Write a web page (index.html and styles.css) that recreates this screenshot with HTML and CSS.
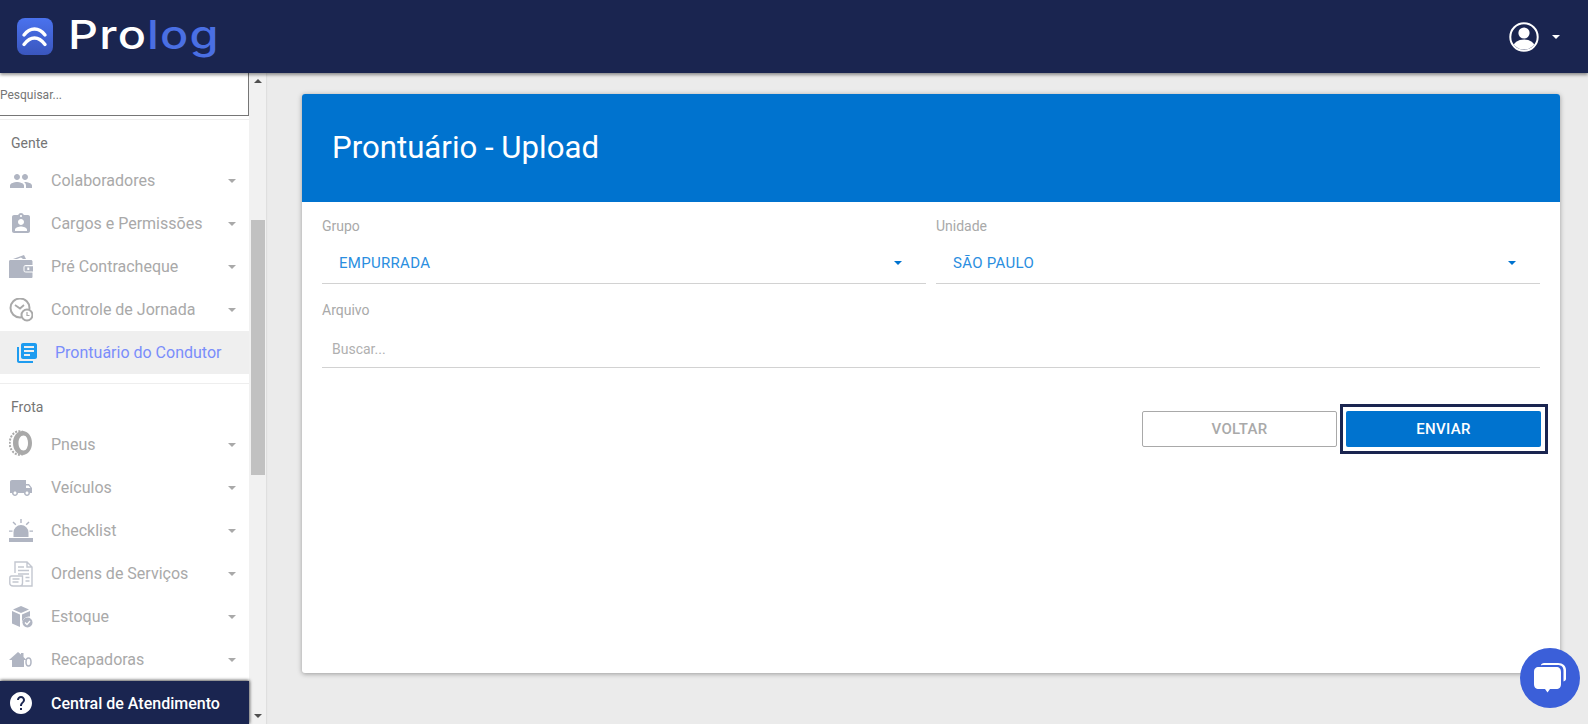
FILE: index.html
```html
<!DOCTYPE html>
<html lang="pt-BR">
<head>
<meta charset="utf-8">
<title>Prontuário - Upload</title>
<link rel="stylesheet" href="styles.css">
</head>
<body>
<header class="topbar">
  <div class="brand">
    <span class="brand-mark">
      <svg viewBox="0 0 36 37" width="36" height="37"><path d="M7 17C10 13 13.500 11 17.500 11S25 13 28 17M7 26.500C10 22.500 13.500 20 17.500 20S25 22.500 28 26.500" fill="none" stroke="#fff" stroke-width="3.400" stroke-linecap="round"/></svg>
    </span>
    <span class="brand-name">Pro<span class="brand-accent">log</span></span>
  </div>
  <div class="user">
    <svg viewBox="0 0 30 30" width="30" height="30"><defs><clipPath id="uc"><circle cx="15" cy="15" r="12.600"/></clipPath></defs><circle cx="15" cy="15" r="13.700" fill="none" stroke="#fff" stroke-width="2"/><circle cx="15" cy="11" r="5.600" fill="#fff"/><ellipse cx="15" cy="25" rx="11" ry="7.500" fill="#fff" clip-path="url(#uc)"/></svg>
    <span class="caret caret-white"></span>
  </div>
</header>

<div class="layout">
  <aside class="sidebar">
    <nav class="nav">
      <input class="search" type="text" placeholder="Pesquisar...">
      <div class="nav-scroll">
        <div class="group-title">Gente</div>
        <a class="item"><svg class="ico" viewBox="0 0 24 24"><path d="M16 11c1.660 0 2.990-1.340 2.990-3S17.660 5 16 5c-1.660 0-3 1.340-3 3s1.340 3 3 3zm-8 0c1.660 0 2.990-1.340 2.990-3S9.660 5 8 5C6.340 5 5 6.340 5 8s1.340 3 3 3zm0 2c-2.330 0-7 1.170-7 3.500V19h14v-2.500c0-2.330-4.670-3.500-7-3.500zm8 0c-.29 0-.62.02-.97.05 1.160.84 1.970 1.970 1.970 3.450V19h6v-2.500c0-2.330-4.670-3.500-7-3.500z"/></svg><span class="label">Colaboradores</span><span class="caret"></span></a>
        <a class="item"><svg class="ico" viewBox="0 0 24 24"><path d="M19 3h-4.180C14.400 1.840 13.300 1 12 1c-1.300 0-2.400.84-2.820 2H5c-1.100 0-2 .9-2 2v14c0 1.100.9 2 2 2h14c1.100 0 2-.9 2-2V5c0-1.100-.9-2-2-2zm-7 0c.55 0 1 .45 1 1s-.45 1-1 1-1-.45-1-1 .45-1 1-1zm0 4c1.660 0 3 1.340 3 3s-1.340 3-3 3-3-1.340-3-3 1.340-3 3-3zm6 12H6v-1.400c0-2 4-3.100 6-3.100s6 1.100 6 3.100V19z"/></svg><span class="label">Cargos e Permissões</span><span class="caret"></span></a>
        <a class="item"><svg class="ico" viewBox="0 0 24 24"><path d="M4 4 15 0l2 4h-3l-2-1.500L8 4zM0 6.500C0 5.500.7 5 1.500 5H22c.8 0 1.500.6 1.500 1.500V10h-6.500c-1.700 0-2.500 1-2.500 2.500v2.500c0 1.700.8 2.500 2.500 2.500h6.500V22c0 .6-.5 1-1.500 1H0zM15.500 11.200H24v5.300h-8.500zm2.800 1.400v2.400h2v-2.400z" fill-rule="evenodd"/></svg><span class="label">Pré Contracheque</span><span class="caret"></span></a>
        <a class="item"><svg class="ico ico-grey" viewBox="0 0 24 24"><circle cx="11" cy="10" r="9.500" fill="none" stroke-width="2"/><path d="M6 7l5 3.500L15 7" fill="none" stroke-width="1.800"/><circle cx="18" cy="17" r="5.500" fill="#fff" stroke-width="2"/><path d="M18 14v3.500h2.500" fill="none" stroke-width="1.200"/></svg><span class="label">Controle de Jornada</span><span class="caret"></span></a>
        <a class="item item-active"><svg class="ico ico-blue" viewBox="0 0 24 24"><path d="M4 6H2v14c0 1.100.9 2 2 2h14v-2H4V6zm16-4H8c-1.100 0-2 .9-2 2v12c0 1.100.9 2 2 2h12c1.100 0 2-.9 2-2V4c0-1.100-.9-2-2-2zm-1 9H9V9h10v2zm-4 4H9v-2h6v2zm4-8H9V5h10v2z"/></svg><span class="label">Prontuário do Condutor</span></a>
        <hr class="divider">
        <div class="group-title group-title-fleet">Frota</div>
        <a class="item"><svg class="ico ico-tire" viewBox="0 0 24 26"><ellipse cx="10.500" cy="13" rx="9.800" ry="11.800" fill="none" stroke="#a9a9a9" stroke-width="2" stroke-dasharray="2 1.300"/><path fill="#a9a9a9" fill-rule="evenodd" d="M13.500 1C19 1 23 6.400 23 13s-4 12-9.500 12S4 19.600 4 13 8 1 13.500 1zm1 4.500c-3 0-5 3.400-5 7.500s2 7.500 5 7.500 4.500-3.400 4.500-7.500-1.500-7.500-4.500-7.500z"/></svg><span class="label">Pneus</span><span class="caret"></span></a>
        <a class="item"><svg class="ico" viewBox="0 0 24 24"><path d="M20 8h-3V4H3c-1.100 0-2 .9-2 2v11h2c0 1.660 1.340 3 3 3s3-1.340 3-3h6c0 1.660 1.340 3 3 3s3-1.340 3-3h2v-5l-3-4zM6 18.500c-.83 0-1.500-.67-1.500-1.500s.67-1.500 1.500-1.500 1.500.67 1.500 1.500-.67 1.500-1.500 1.500zm13.500-9l1.960 2.500H17V9.500h2.500zm-1.500 9c-.83 0-1.500-.67-1.500-1.500s.67-1.500 1.500-1.500 1.500.67 1.500 1.500-.67 1.500-1.500 1.500z"/></svg><span class="label">Veículos</span><span class="caret"></span></a>
        <a class="item"><svg class="ico" viewBox="0 0 24 24"><path d="M4.500 18v-4.500a7.500 7.500 0 0 1 15 0V18zM0 19h24v4H0zM11.300 0h1.400v4h-1.400zM3.500 3.500l1-1 2.800 2.800-1 1zM20.500 3.500l-1-1-2.800 2.800 1 1zM0 11.500h3.500v1.300H0zM20.500 11.500H24v1.300h-3.500z"/></svg><span class="label">Checklist</span><span class="caret"></span></a>
        <a class="item"><svg class="ico ico-line" viewBox="0 0 24 26"><path d="M6 12V1h12l5 5v19H4c-2 0-3.200-1-3.200-2.500V17c0-1 .7-2 1.700-2h11v7c0 2-1 3-2.500 3M18 1v5h5M9 6h6M9 9.500h11M9 13h11M16.500 16.500h4M16.500 20h4M3.500 18h7M3.500 21h6"/></svg><span class="label">Ordens de Serviços</span><span class="caret"></span></a>
        <a class="item"><svg class="ico" viewBox="0 0 24 24"><path d="M12 1l8 3.500-8 3.500-8-3.500zM3 6l8 3.500V22l-8-3.500zM21 6v5.500A7 7 0 0 0 13 18.500V9.500z"/><circle cx="18.500" cy="17.500" r="5"/><path d="M16 17.500l2 2 3-3.500" fill="none" stroke="#fff" stroke-width="1.300"/></svg><span class="label">Estoque</span><span class="caret"></span></a>
        <a class="item"><svg class="ico ico-small" viewBox="0 0 24 16"><path d="M0 8 9 0l3 2.500V1h2.500v4l3 3h-2.500v7H3V8z"/><ellipse cx="19.500" cy="10" rx="2.500" ry="4" fill="none" stroke="#b0b5c2" stroke-width="1.500"/></svg><span class="label">Recapadoras</span><span class="caret"></span></a>
      </div>
      <a class="help"><svg class="ico-help" viewBox="0 0 24 24"><path d="M12 1C5.920 1 1 5.920 1 12s4.920 11 11 11 11-4.920 11-11S18.080 1 12 1zm1 18h-2v-2h2v2zm2.070-7.750l-.9.92C13.450 12.900 13 13.500 13 15h-2v-.5c0-1.100.45-2.100 1.170-2.830l1.240-1.260c.37-.36.59-.86.59-1.410 0-1.100-.9-2-2-2s-2 .9-2 2H8c0-2.210 1.790-4 4-4s4 1.790 4 4c0 .88-.36 1.680-.93 2.250z"/></svg><span>Central de Atendimento</span></a>
    </nav>
    <div class="scrollbar">
      <span class="arrow arrow-up"></span>
      <span class="thumb"></span>
      <span class="arrow arrow-down"></span>
    </div>
  </aside>

  <main class="content">
    <section class="card">
      <div class="card-head"><h1>Prontuário - Upload</h1></div>
      <form class="card-body">
        <div class="row">
          <div class="field">
            <label class="field-label">Grupo</label>
            <div class="control control-select"><span class="value">EMPURRADA</span><span class="caret caret-blue"></span></div>
          </div>
          <div class="field">
            <label class="field-label">Unidade</label>
            <div class="control control-select"><span class="value">SÃO PAULO</span><span class="caret caret-blue"></span></div>
          </div>
        </div>
        <div class="field">
          <label class="field-label">Arquivo</label>
          <div class="control control-file"><span class="placeholder">Buscar...</span></div>
        </div>
        <div class="actions">
          <button type="button" class="btn btn-ghost">VOLTAR</button>
          <button type="button" class="btn btn-primary">ENVIAR</button>
        </div>
      </form>
    </section>
  </main>
</div>

<div class="chat">
  <svg viewBox="0 0 36 36" width="36" height="36"><path d="M12 3h14c5 0 8 3 8 7v9c0 1-1 2-2.500 2.500V11c0-4-2-6-6-6H12c-1 0-3 .5-3 0 0-1 1.500-2 3-2z" fill="#fff"/><path d="M7 7h17c3.500 0 5 2 5 5v12c0 3-1.500 5-5 5h-6l-2.500 3.500L13 29H7c-3.500 0-5-2-5-5V12c0-3 1.500-5 5-5z" fill="#fff"/></svg>
</div>
</body>
</html>
```
FILE: styles.css
```css
* { box-sizing: border-box; }
html, body { height: 100%; }
body {
  margin: 0;
  overflow: hidden;
  display: flex;
  flex-direction: column;
  background: #ebebeb;
  font-family: Roboto, "Liberation Sans", sans-serif;
}

/* Top bar */
.topbar {
  flex: 0 0 73px;
  display: flex;
  align-items: center;
  justify-content: space-between;
  padding: 0 28px 0 17px;
  background: #1a2550;
  box-shadow: 0 2px 3px rgba(0, 0, 0, .4);
  position: relative;
  z-index: 3;
}
.brand { display: flex; align-items: center; gap: 15px; margin-top: -1px; }
.brand-mark {
  display: flex;
  width: 36px;
  height: 37px;
  border-radius: 8px;
  background: linear-gradient(#4a72ee, #3a56bd);
}
.brand-name {
  display: inline-block;
  margin-top: -3px;
  font-family: Inter, sans-serif;
  font-size: 39px;
  font-weight: 500;
  line-height: 46px;
  letter-spacing: 1px;
  color: #fff;
  transform: scaleX(1.2);
  transform-origin: left center;
}
.brand-accent { color: #4a6fe3; }
.user { display: flex; align-items: center; gap: 13px; }

.caret {
  display: block;
  flex: none;
  width: 0;
  height: 0;
  border-left: 4px solid transparent;
  border-right: 4px solid transparent;
  border-top: 4px solid #a9a9a9;
}
.caret-white { border-top-color: #fff; }
.caret-blue { border-top-color: #0073cf; }

/* Layout */
.layout { flex: 1; display: flex; min-height: 0; }
.sidebar { flex: 0 0 266px; display: flex; min-height: 0; }
.nav {
  flex: 0 0 249px;
  display: flex;
  flex-direction: column;
  min-height: 0;
  background: #fff;
}
.search {
  flex: 0 0 43px;
  width: 249px;
  padding: 1px 0 0;
  border: 0;
  border-right: 1px solid #767676;
  border-bottom: 1px solid #767676;
  outline: 0;
  background: #fff;
  font: 12px Roboto, sans-serif;
}
.search::placeholder { color: #757575; opacity: 1; }
.nav-scroll {
  flex: 1;
  min-height: 0;
  overflow: hidden;
  margin-top: 3px;
  border-top: 1px solid #eee;
}
.group-title {
  height: 16px;
  margin-top: 15px;
  padding-left: 11px;
  font-size: 14px;
  line-height: 16px;
  color: #757575;
}
.group-title-fleet { margin-top: 15px; }
.item {
  display: flex;
  align-items: center;
  height: 43px;
  padding: 0 13px 0 9px;
  font-size: 16px;
  color: #a9a9a9;
}
.group-title + .item { margin-top: 8px; }
.label { flex: 1; margin-left: 18px; white-space: nowrap; }
.ico { flex: none; width: 24px; height: 24px; fill: #b0b5c2; }
.ico-small { height: 16px; }
.ico-grey { fill: #a9a9a9; stroke: #a9a9a9; }
.ico-tire { height: 26px; margin-top: -4px; }
.ico-line { height: 26px; fill: none; stroke: #c3c7d0; stroke-width: 1.400; }
.ico-blue { fill: #1e9cf0; }
.item-active {
  padding-left: 15px;
  background: #efefef;
  color: #7a8dfb;
}
.item-active .label { margin-left: 16px; }
.divider { height: 1px; margin: 9px 0 0; border: 0; background: #eee; }
.help {
  flex: 0 0 43px;
  display: flex;
  align-items: center;
  gap: 18px;
  padding: 1px 0 0 9px;
  background: #1a2550;
  box-shadow: 0 -1px 3px rgba(0, 0, 0, .5), 1px 0 3px rgba(0, 0, 0, .35);
  position: relative;
  font-size: 16px;
  font-weight: 500;
  color: #fff;
}
.ico-help { width: 24px; height: 24px; fill: #fff; flex: none; }

.scrollbar {
  flex: 0 0 17px;
  display: flex;
  flex-direction: column;
  align-items: center;
  background: #f1f1f1;
  padding: 6px 0;
  box-shadow: 1px 0 1px rgba(0, 0, 0, .05);
}
.arrow { width: 0; height: 0; border-left: 4px solid transparent; border-right: 4px solid transparent; }
.arrow-up { border-bottom: 4px solid #505050; }
.arrow-down { border-top: 4px solid #505050; margin-top: auto; }
.thumb { width: 14px; height: 255px; margin: 137px 0 0 1px; background: #c1c1c1; }

/* Content */
.content { flex: 1; min-width: 0; padding: 21px 28px 0 36px; }
.card {
  height: 579px;
  background: #fff;
  border-radius: 3px;
  overflow: hidden;
  box-shadow: 0 1px 5px rgba(0, 0, 0, .35);
}
.card-head {
  display: flex;
  align-items: center;
  height: 108px;
  padding: 0 0 2px 30px;
  background: #0073cf;
}
.card-head h1 {
  margin: 0;
  font-size: 31.200px;
  font-weight: 400;
  color: #fff;
}
.card-body { padding: 16px 20px; }
.row { display: flex; gap: 10px; }
.field { flex: 1; margin-bottom: 18px; }
.field-label {
  display: block;
  height: 16px;
  font-size: 14px;
  line-height: 16px;
  color: #a9a9a9;
}
.control {
  display: flex;
  align-items: center;
  height: 50px;
  border-bottom: 1px solid #d2d2d2;
  font-size: 14px;
}
.control-select { justify-content: space-between; padding: 9px 24px 0 17px; }
.value { color: #2a8ee0; font-size: 15px; letter-spacing: .3px; }
.control-file { padding: 13px 0 0 10px; }
.placeholder { color: #b0b0b0; }

.actions { display: flex; justify-content: flex-end; gap: 9px; margin: 43px -1px 0 0; }
.btn {
  width: 195px;
  height: 36px;
  padding: 0;
  border-radius: 2px;
  font: 500 15px Roboto, sans-serif;
  letter-spacing: .3px;
}
.btn-ghost { background: #fff; border: 1px solid #a9a9a9; color: #a9a9a9; }
.btn-primary {
  position: relative;
  background: #0073cf;
  border: 0;
  color: #fff;
}
.btn-primary::after {
  content: "";
  position: absolute;
  inset: -7px -7px -7px -6px;
  border: 3px solid #1a2550;
}

/* Floating chat */
.chat {
  position: fixed;
  left: 1520px;
  top: 648px;
  width: 60px;
  height: 60px;
  display: flex;
  align-items: center;
  justify-content: center;
  border-radius: 50%;
  background: #3b5fd9;
}
```
